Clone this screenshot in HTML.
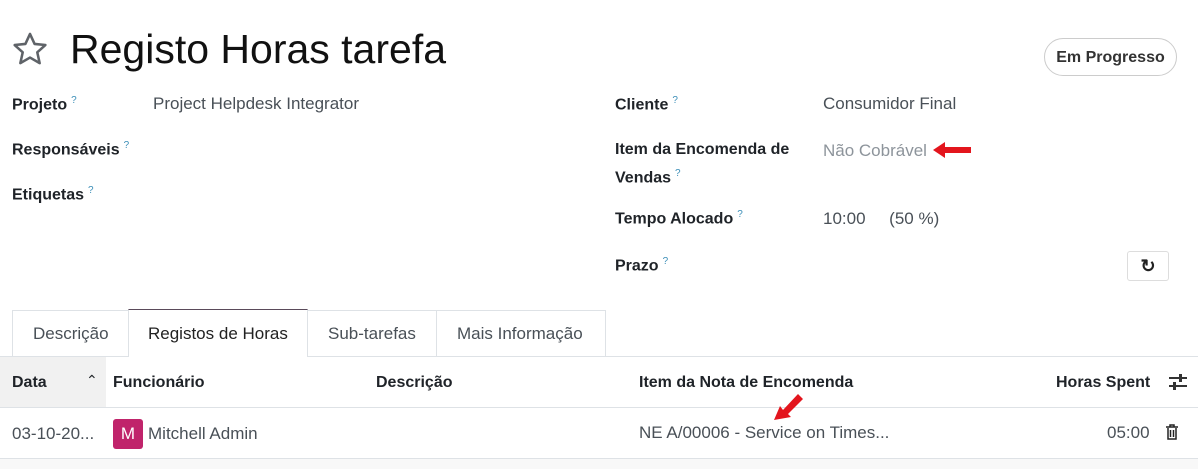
<!DOCTYPE html><html><head><style>
body{margin:0;width:1198px;height:468px;background:#fff;font-family:"Liberation Sans",sans-serif;color:#212529;position:relative;overflow:hidden;font-size:16px}
.a{position:absolute;white-space:nowrap}
.l{font-weight:bold;color:#1f2328}
sup{color:#3d8fb8;font-size:10px;font-weight:normal;margin-left:4px}
.v{color:#495057;font-size:17px}
</style></head><body>
<svg class="a" style="left:11px;top:30px" width="38" height="38" viewBox="0 0 24 24"><path d="M12 2.5l2.9 6.3 6.8.7-5.1 4.6 1.5 6.8L12 17.4l-6.1 3.5 1.5-6.8-5.1-4.6 6.8-.7z" fill="none" stroke="#5f6368" stroke-width="1.6" stroke-linejoin="round"/></svg>
<div class="a" style="left:70px;top:26px;font-size:41px;color:#111">Registo Horas tarefa</div>
<div class="a" style="left:1044px;top:38px;width:133px;height:38px;border:1px solid #ccc;border-radius:20px;box-sizing:border-box;text-align:center;line-height:38px;font-weight:bold;color:#333">Em Progresso</div>
<div class="a l" style="left:12px;top:95px">Projeto<sup>?</sup></div>
<div class="a v" style="left:153px;top:94px">Project Helpdesk Integrator</div>
<div class="a l" style="left:12px;top:140px">Responsáveis<sup>?</sup></div>
<div class="a l" style="left:12px;top:185px">Etiquetas<sup>?</sup></div>
<div class="a l" style="left:615px;top:95px">Cliente<sup>?</sup></div>
<div class="a v" style="left:823px;top:94px">Consumidor Final</div>
<div class="a l" style="left:615px;top:138px;line-height:24px">Item da Encomenda de<br>Vendas<sup>?</sup></div>
<div class="a v" style="left:823px;top:141px;color:#8d949b">Não Cobrável</div>
<svg class="a" style="left:933px;top:141px" width="40" height="18"><path d="M0 9L12 1V6H38V12H12V17Z" fill="#e3151d"/></svg>
<div class="a l" style="left:615px;top:209px">Tempo Alocado<sup>?</sup></div>
<div class="a v" style="left:823px;top:209px">10:00&nbsp;&nbsp;&nbsp;&nbsp;&nbsp;(50 %)</div>
<div class="a l" style="left:615px;top:256px">Prazo<sup>?</sup></div>
<div class="a" style="left:1127px;top:251px;width:42px;height:30px;border:1px solid #ddd;border-radius:3px;box-sizing:border-box;text-align:center;line-height:28px;font-weight:bold;font-size:18px;color:#222">&#8635;</div>
<div class="a" style="left:0;top:356px;width:1198px;height:1px;background:#dee2e6"></div>
<div class="a" style="left:12px;top:310px;width:594px;height:46px;border:1px solid #dee2e6;border-bottom:0;box-sizing:border-box"></div>
<div class="a" style="left:128px;top:309px;width:180px;height:48px;border:1px solid #dee2e6;border-top:1px solid #5a4a5a;border-bottom:0;background:#fff;box-sizing:border-box"></div>
<div class="a" style="left:436px;top:310px;width:1px;height:46px;background:#dee2e6"></div>
<div class="a v" style="left:33px;top:324px">Descrição</div>
<div class="a v" style="left:148px;top:324px;color:#222">Registos de Horas</div>
<div class="a v" style="left:328px;top:324px">Sub-tarefas</div>
<div class="a v" style="left:457px;top:324px">Mais Informação</div>
<div class="a" style="left:0;top:357px;width:106px;height:50px;background:#f1f1f1"></div>
<div class="a l" style="left:12px;top:374px">Data</div>
<div class="a" style="left:86px;top:372px;font-size:14px">&#8963;</div>
<div class="a l" style="left:113px;top:374px">Funcionário</div>
<div class="a l" style="left:376px;top:374px">Descrição</div>
<div class="a l" style="left:639px;top:374px">Item da Nota de Encomenda</div>
<div class="a l" style="left:1056px;top:374px">Horas Spent</div>
<svg class="a" style="left:1167px;top:372px" width="22" height="20"><path d="M2 6H20M2 14H20" stroke="#333" stroke-width="2"/><rect x="12" y="2" width="3" height="8" fill="#333"/><rect x="6" y="10" width="3" height="8" fill="#333"/></svg>
<div class="a" style="left:0;top:407px;width:1198px;height:1px;background:#dee2e6"></div>
<div class="a v" style="left:12px;top:424px">03-10-20...</div>
<div class="a" style="left:113px;top:419px;width:30px;height:30px;background:#c0246b;border-radius:3px;color:#fff;text-align:center;line-height:30px;font-size:17px">M</div>
<div class="a v" style="left:148px;top:424px">Mitchell Admin</div>
<div class="a v" style="left:639px;top:423px">NE A/00006 - Service on Times...</div>
<svg class="a" style="left:770px;top:390px" width="36" height="32"><path d="M4 30L10 16L13 20L28 4L33 9L18 24L21 27Z" fill="#e3151d"/></svg>
<div class="a v" style="left:1107px;top:423px">05:00</div>
<svg class="a" style="left:1165px;top:424px" width="14" height="16"><path d="M1 3H13M5 3V1H9V3M3 4V15H11V4M5.5 6V13M8.5 6V13" stroke="#222" stroke-width="1.5" fill="none"/></svg>
<div class="a" style="left:0;top:458px;width:1198px;height:10px;background:#f8f8f8;border-top:1px solid #dee2e6"></div>
</body></html>
